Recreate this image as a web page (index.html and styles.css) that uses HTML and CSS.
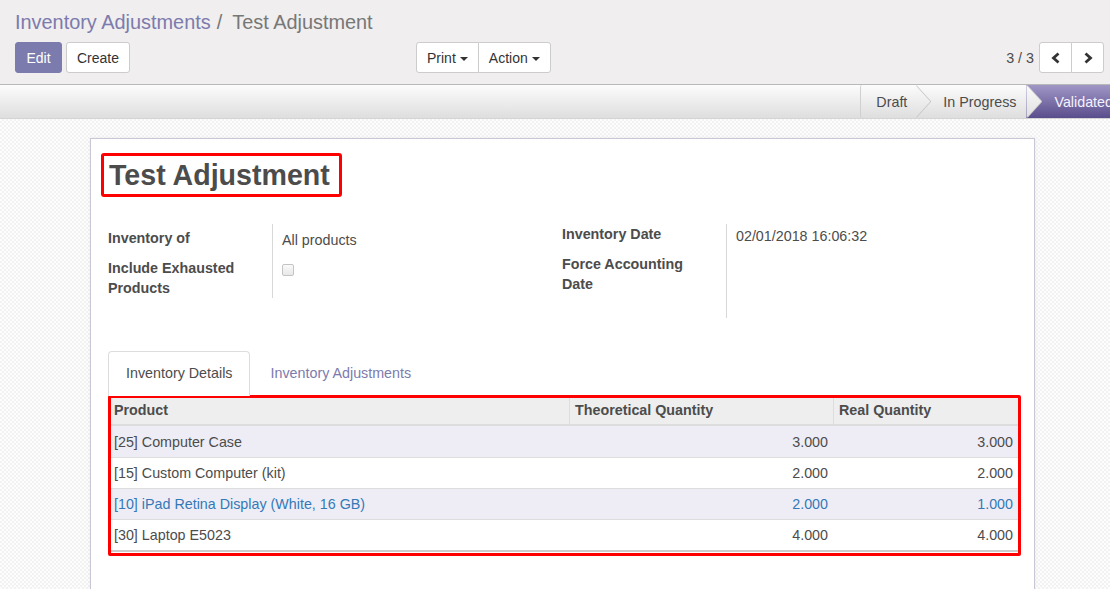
FILE: index.html
```html
<!DOCTYPE html>
<html>
<head>
<meta charset="utf-8">
<link rel="stylesheet" href="styles.css">
</head>
<body>
<div class="cp">
  <div class="crumbs"><span class="crumb-link">Inventory Adjustments</span><span class="crumb-sep">/</span><span class="crumb-cur">Test Adjustment</span></div>
  <div class="cp-row">
    <div class="cp-left">
      <button class="btn btn-primary">Edit</button>
      <button class="btn">Create</button>
    </div>
    <div class="cp-mid">
      <div class="btn-group">
        <button class="btn">Print <span class="caret"></span></button>
        <button class="btn">Action <span class="caret"></span></button>
      </div>
    </div>
    <div class="cp-right">
      <span class="pager-val">3 / 3</span>
      <div class="btn-group">
        <button class="btn btn-icon"><svg width="12" height="14" viewBox="0 0 12 14"><path d="M8.5 2.5 L3.5 7 L8.5 11.5" fill="none" stroke="#333" stroke-width="2.8" stroke-linejoin="miter"/></svg></button>
        <button class="btn btn-icon"><svg width="12" height="14" viewBox="0 0 12 14"><path d="M3.5 2.5 L8.5 7 L3.5 11.5" fill="none" stroke="#333" stroke-width="2.8" stroke-linejoin="miter"/></svg></button>
      </div>
    </div>
  </div>
</div>
<div class="statusbar">
  <div class="steps">
    <div class="step step-first">Draft</div>
    <div class="step">In Progress</div>
    <div class="step step-active">Validated</div>
  </div>
</div>
<div class="page">
  <div class="sheet">
    <div class="title-box"><h1 class="title">Test Adjustment</h1></div>
    <div class="groups">
      <div class="group group-left">
        <div class="lbl lbl-1">Inventory of</div>
        <div class="val val-1">All products</div>
        <div class="lbl lbl-2">Include Exhausted Products</div>
        <div class="val val-2"><span class="checkbox"></span></div>
      </div>
      <div class="group group-right">
        <div class="lbl rlbl-1">Inventory Date</div>
        <div class="val rval-1">02/01/2018 16:06:32</div>
        <div class="lbl rlbl-2">Force Accounting Date</div>
        <div class="val rval-2"></div>
      </div>
    </div>
    <div class="tabs">
      <div class="tab tab-active">Inventory Details</div>
      <div class="tab">Inventory Adjustments</div>
    </div>
    <div class="table-box">
      <table class="grid">
        <colgroup><col class="c1"><col class="c2"><col class="c3"></colgroup>
        <thead>
          <tr><th>Product</th><th>Theoretical Quantity</th><th>Real Quantity</th></tr>
        </thead>
        <tbody>
          <tr class="odd"><td>[25] Computer Case</td><td class="num">3.000</td><td class="num">3.000</td></tr>
          <tr><td>[15] Custom Computer (kit)</td><td class="num">2.000</td><td class="num">2.000</td></tr>
          <tr class="odd info"><td>[10] iPad Retina Display (White, 16 GB)</td><td class="num">2.000</td><td class="num">1.000</td></tr>
          <tr><td>[30] Laptop E5023</td><td class="num">4.000</td><td class="num">4.000</td></tr>
        </tbody>
      </table>
    </div>
  </div>
</div>
</body>
</html>
```
FILE: styles.css
```css
* { box-sizing: border-box; }
html, body { margin: 0; padding: 0; }
body {
  width: 1110px;
  height: 589px;
  overflow: hidden;
  font-family: "Liberation Sans", Arial, sans-serif;
  font-size: 14.3px;
  color: #4c4c4c;
  background: #f9f9f9;
}

/* control panel */
.cp {
  background: #f0eeee;
  height: 85px;
  border-bottom: 1px solid #b8b8b8;
  padding: 8px 6px 0 15px;
}
.crumbs {
  height: 28px;
  line-height: 28px;
  font-size: 19.9px;
  white-space: nowrap;
}
.crumb-link { color: #7c7bad; }
.crumb-sep { color: #777; margin: 0 10px 0 6px; }
.crumb-cur { color: #777; }
.cp-row {
  margin-top: 6px;
  display: grid;
  grid-template-columns: 401px 1fr auto;
  align-items: center;
}
.cp-left { display: flex; gap: 4px; }
.cp-right { display: flex; align-items: center; gap: 5px; }
.btn {
  font-family: "Liberation Sans", Arial, sans-serif;
  font-size: 14px;
  height: 31px;
  padding: 0 10px;
  background: #fff;
  color: #333;
  border: 1px solid #ccc;
  border-radius: 3px;
  display: inline-flex;
  align-items: center;
  gap: 4px;
}
.btn-primary {
  background: #7c7bad;
  border-color: #7c7bad;
  color: #fff;
  width: 47px;
  justify-content: center;
  padding: 0;
}
.btn-group { display: flex; }
.btn-group .btn { border-radius: 0; }
.btn-group .btn:first-child { border-radius: 3px 0 0 3px; }
.btn-group .btn:last-child { border-radius: 0 3px 3px 0; margin-left: -1px; }
.caret {
  display: inline-block;
  width: 0; height: 0;
  border-left: 4px solid transparent;
  border-right: 4px solid transparent;
  border-top: 4px solid #333;
  margin-top: 2px;
}
.pager-val { font-size: 14.3px; color: #4c4c4c; }
.btn-icon { width: 33px; padding: 0; justify-content: center; }

/* status bar */
.statusbar {
  height: 34px;
  background: linear-gradient(#fcfcfc, #dedede);
  border-bottom: 1px solid #d4d4d4;
  display: flex;
  justify-content: flex-end;
  overflow: hidden;
}
.steps { display: flex; height: 33px; margin-right: -43px; }
.step {
  position: relative;
  height: 33px;
  line-height: 34px;
  font-size: 14.3px;
  color: #4c4c4c;
  padding: 0 10px 0 15px;
  z-index: 2;
}
.step-first {
  border-left: 1px solid #d0d0d0;
  border-radius: 2px 0 0 2px;
  padding-left: 15px;
  padding-right: 8px;
  z-index: 3;
}
.step::before,
.step::after {
  content: "";
  position: absolute;
  top: 0;
  left: 100%;
  width: 15px;
  height: 33px;
  clip-path: polygon(0 0, 100% 50%, 0 100%);
}
.step::before { background: #c4c4c4; margin-left: 1px; }
.step::after { background: linear-gradient(#fbfbfb, #dfdfdf); }
.step + .step { padding-left: 28px; }
.step-active {
  background: linear-gradient(#a197c6, #5a4d8c);
  color: #f4f2ff;
  z-index: 1;
  padding-left: 21px;
  padding-right: 40px;
}
.step-active::before, .step-active::after { display: none; }

/* page */
.page {
  height: 470px;
  background-color: #fafafa;
  background-image: repeating-conic-gradient(#f2f2f2 0 25%, #fdfdfd 0 50%);
  background-size: 4px 4px;
  padding: 19px 75px 0 90px;
}
.sheet {
  background: #fff;
  border: 1px solid #c9c7d6;
  border-bottom: none;
  height: 460px;
  padding: 14px 16px 0 17px;
  box-shadow: 0 0 4px rgba(0,0,0,0.06);
}
.title-box {
  display: inline-block;
  margin-left: -7px;
  border: 3px solid #ff0000;
  border-radius: 3px;
  padding: 0 9px 0 5px;
}
.title {
  margin: 0;
  font-size: 28.6px;
  line-height: 38px;
  font-weight: bold;
  color: #4c4c4c;
}

.groups {
  margin-top: 27px;
  display: grid;
  grid-template-columns: 454px 1fr;
}
.group {
  display: grid;
  grid-template-columns: 165px 1fr;
  align-content: start;
}
.lbl {
  font-weight: bold;
  line-height: 20px;
  border-right: 1px solid #d8d8d8;
  padding-right: 20px;
}
.val { padding-left: 9px; line-height: 20px; }
.lbl-1 { padding-top: 4px; padding-bottom: 6px; }
.val-1 { padding-top: 6px; }
.lbl-2 { padding-top: 4px; }
.val-2 { padding-top: 10px; }
.checkbox {
  display: block;
  width: 12px; height: 12px;
  border: 1px solid #c4c4c4;
  border-radius: 2px;
  background: linear-gradient(#fafafa, #e8e8e8);
}
.rlbl-1 { padding-bottom: 10px; }
.rval-1 { padding-top: 2px; }
.rlbl-2 { padding-bottom: 24px; padding-right: 30px; }

.tabs {
  margin-top: 33px;
  display: flex;
  gap: 2px;
  height: 45px;
}
.tab {
  padding: 0 17px 0 17px;
  line-height: 43px;
  color: #7c7bad;
  border: 1px solid transparent;
}
.tab-active {
  color: #4c4c4c;
  background: #fff;
  border-color: #ddd;
  border-bottom: none;
  border-radius: 4px 4px 0 0;
  height: 45px;
}

.table-box {
  margin-top: -1px;
  width: 913px;
  border: 3px solid #ff0000;
  border-radius: 2px;
  padding-bottom: 1px;
}
.grid {
  width: 100%;
  table-layout: fixed;
  border-collapse: separate;
  border-spacing: 0;
}
.c1 { width: 458px; }
.c2 { width: 264px; }
.grid th {
  background: #eeeeee;
  text-align: left;
  font-weight: bold;
  line-height: 20px;
  padding: 2px 5px 4px 5px;
  border-bottom: 2px solid #dddddd;
  border-left: 1px solid #dddddd;
}
.grid th:first-child { border-left: none; padding-left: 3px; }
.grid td {
  line-height: 20px;
  padding: 5px 5px 5px 3px;
  border-top: 1px solid #dddddd;
}
.grid tbody tr:first-child td { border-top: none; padding-top: 6px; }
.grid tbody tr:last-child td { border-bottom: 2px solid #cccccc; }
.grid td.num { text-align: right; }
.grid tr.odd td { background: #eeedf6; }
.grid tr.info td { color: #3479b6; }
```
